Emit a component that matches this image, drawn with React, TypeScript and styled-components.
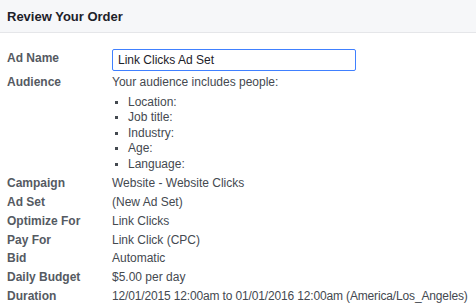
import React from 'react';
import styled, { createGlobalStyle } from 'styled-components';

const GlobalStyle = createGlobalStyle`
  body {
    margin: 0;
    background: #fff;
    font-family: "Liberation Sans", Arial, sans-serif;
  }
`;

type Row = { label: string; value: string; tight?: boolean };

const details: Row[] = [
  { label: 'Campaign', value: 'Website - Website Clicks' },
  { label: 'Ad Set', value: '(New Ad Set)' },
  { label: 'Optimize For', value: 'Link Clicks' },
  { label: 'Pay For', value: 'Link Click (CPC)' },
  { label: 'Bid', value: 'Automatic' },
  { label: 'Daily Budget', value: '$5.00 per day' },
  { label: 'Duration', value: '12/01/2015 12:00am to 01/01/2016 12:00am (America/Los_Angeles)', tight: true },
];

const targeting = ['Location:', 'Job title:', 'Industry:', 'Age:', 'Language:'];

const App: React.FC = () => {
  return (
    <Panel>
      <GlobalStyle />
      <Header>
        <Title>Review Your Order</Title>
      </Header>
      <Body>
        <Field>
          <Label>Ad Name</Label>
          <NameInput defaultValue="Link Clicks Ad Set" />
        </Field>
        <Field>
          <Label>Audience</Label>
          <div>
            <Value>Your audience includes people:</Value>
            <Bullets>
              {targeting.map((t) => (
                <Bullet key={t}>{t}</Bullet>
              ))}
            </Bullets>
          </div>
        </Field>
        {details.map((r) => (
          <Field key={r.label}>
            <Label>{r.label}</Label>
            <Value $tight={r.tight}>{r.value}</Value>
          </Field>
        ))}
      </Body>
    </Panel>
  );
};

export default App;

const Panel = styled.div`
  width: 476px;
  height: 306px;
  overflow: hidden;
`;

const Header = styled.div`
  height: 33px;
  background: #f6f7f9;
  border-bottom: 1px solid #e5e6e9;
  display: flex;
  align-items: center;
  padding: 0 7px;
  box-sizing: border-box;
`;

const Title = styled.div`
  font-size: 13px;
  font-weight: bold;
  color: #1d2129;
`;

const Body = styled.div`
  padding: 16px 7px 0;
`;

const Field = styled.div`
  display: grid;
  grid-template-columns: 105px 1fr;
  align-items: start;
  line-height: 18.8px;
  font-size: 12px;
`;

const Label = styled.div`
  font-weight: bold;
  color: #555a62;
  white-space: nowrap;
`;

const Value = styled.div<{ $tight?: boolean }>`
  color: #444950;
  white-space: nowrap;
  letter-spacing: ${(p) => (p.$tight ? '-0.15px' : '0')};
`;

const NameInput = styled.input`
  width: 244px;
  height: 22px;
  box-sizing: border-box;
  border: 1px solid #4080ff;
  border-radius: 2px;
  padding: 0 5px;
  font-family: inherit;
  font-size: 12px;
  color: #1d2129;
  outline: none;
  margin-bottom: 2px;
`;

const Bullets = styled.ul`
  list-style: square;
  margin: 3px 0 2px;
  padding-left: 16px;
  color: #444950;
  line-height: 15.5px;
`;

const Bullet = styled.li`
  &::marker {
    font-size: 10px;
  }
`;
